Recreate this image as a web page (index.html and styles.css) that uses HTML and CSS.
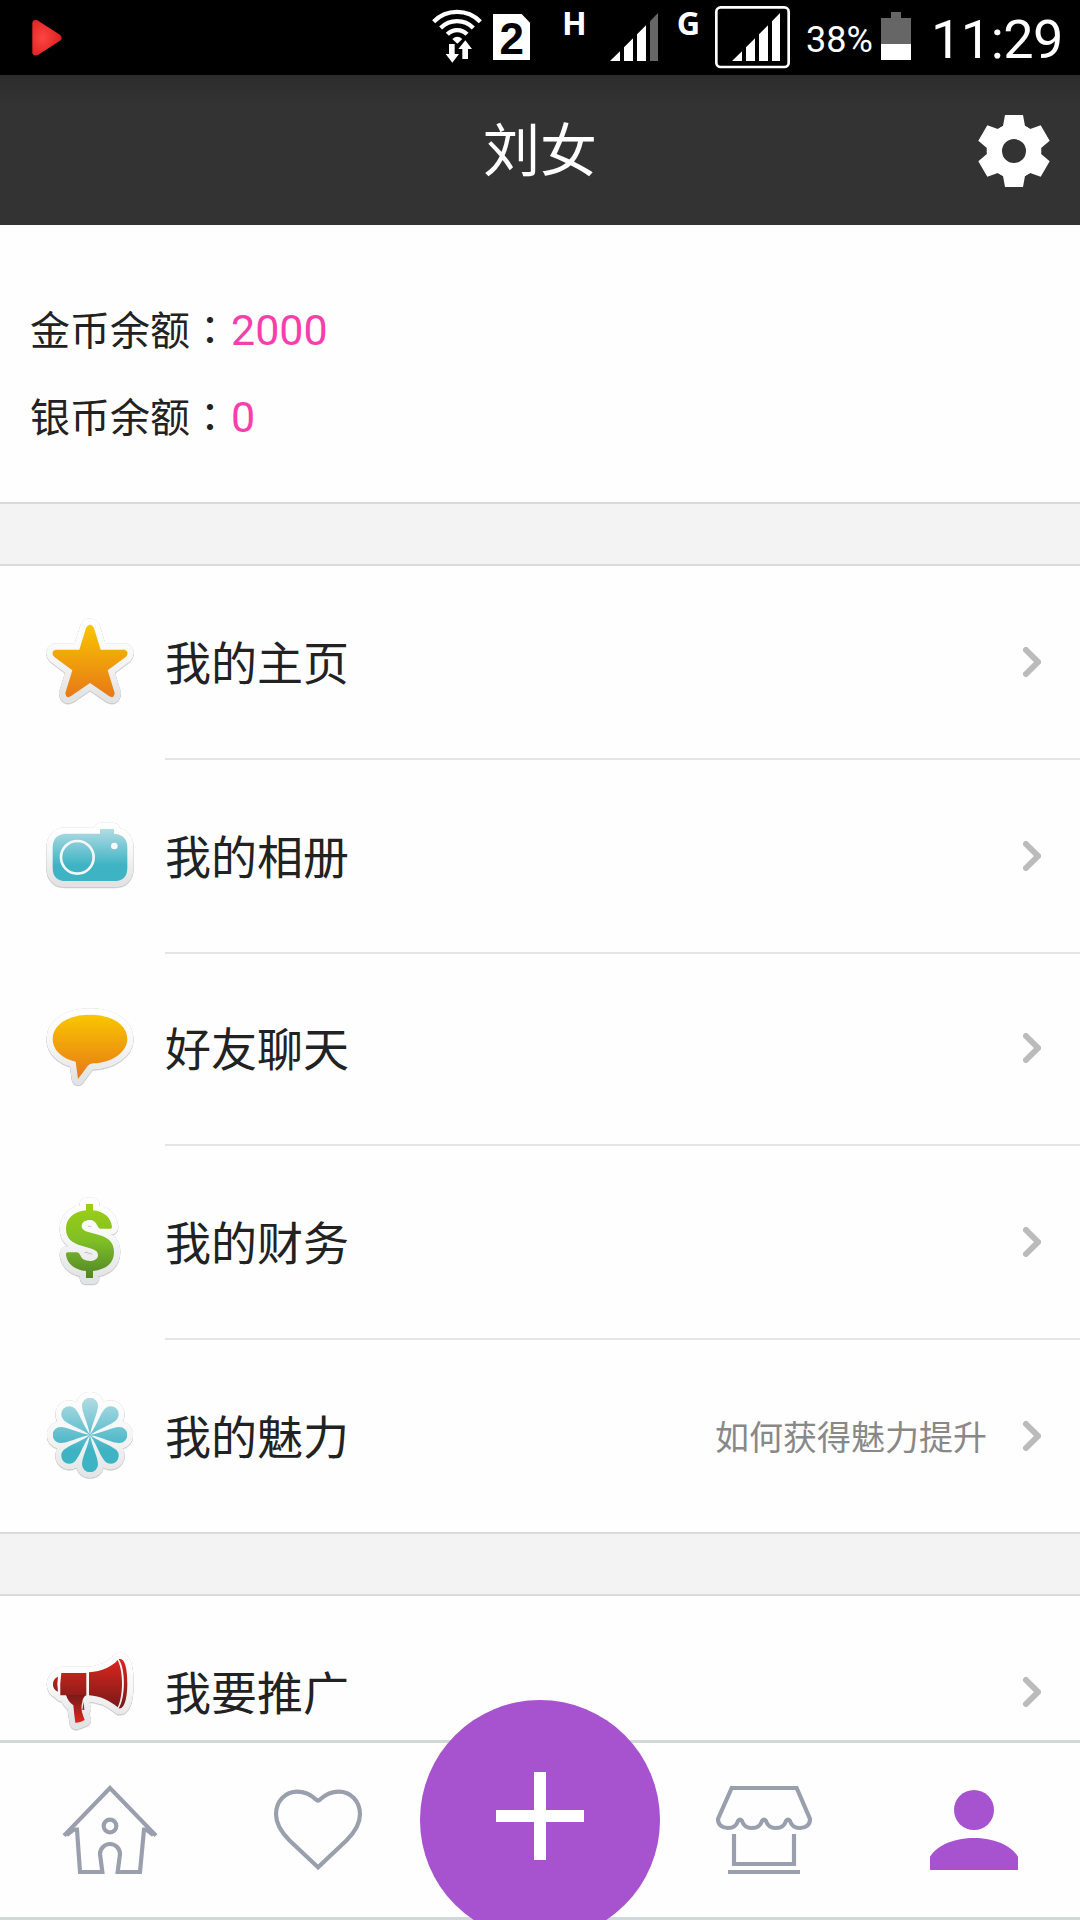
FILE: index.html
```html
<!DOCTYPE html>
<html lang="zh-CN">
<head>
<meta charset="utf-8">
<title>刘女</title>
<link rel="stylesheet" href="styles.css">
</head>
<body>
<svg class="defs" width="0" height="0" aria-hidden="true">
  <defs>
    <linearGradient id="paper" x1="0" y1="0" x2="0" y2="1"><stop offset="0" stop-color="#fff"/><stop offset=".45" stop-color="#f7f7f7"/><stop offset="1" stop-color="#e2e3e4"/></linearGradient>
    <linearGradient id="orange" x1="0" y1="0" x2="0" y2="1"><stop offset="0" stop-color="#f9c600"/><stop offset="1" stop-color="#e77817"/></linearGradient>
    <linearGradient id="teal" x1="0" y1="0" x2="0" y2="1"><stop offset="0" stop-color="#b2dce4"/><stop offset=".7" stop-color="#3eb3c4"/><stop offset="1" stop-color="#3eb3c4"/></linearGradient>
    <linearGradient id="green" gradientUnits="userSpaceOnUse" x1="0" y1="642" x2="0" y2="864"><stop offset="0" stop-color="#9dcf13"/><stop offset=".5" stop-color="#7fbf26"/><stop offset="1" stop-color="#508428"/></linearGradient>
    <linearGradient id="red" gradientUnits="userSpaceOnUse" x1="0" y1="838" x2="0" y2="980"><stop offset="0" stop-color="#dc261f"/><stop offset="1" stop-color="#7a1a18"/></linearGradient>
    <linearGradient id="redHandle" gradientUnits="userSpaceOnUse" x1="0" y1="946" x2="0" y2="1028"><stop offset="0" stop-color="#7a1a18"/><stop offset="1" stop-color="#dc261f"/></linearGradient>
    <radialGradient id="play" cx=".35" cy=".5" r=".6"><stop offset="0" stop-color="#ff4540"/><stop offset="1" stop-color="#dc2324"/></radialGradient>
  </defs>
</svg>

<div class="status">
  <svg class="status-play" viewBox="0 0 300 225"><path fill="url(#play)" d="M97 70Q98 57 112 61L180 104Q190 114 180 122L114 165Q99 170 97 158Z"/></svg>
  <div class="status-right">
    <svg class="status-signals" viewBox="0 0 1128 225">
      <g fill="none" stroke="#fff" stroke-width="13"><path d="M41 65A98 98 0 0 1 181 65"/><path d="M62 84A69 69 0 0 1 160 84"/><path d="M82 103A41 41 0 0 1 141 103"/></g>
      <g fill="#fff">
        <path d="M112 131L97 117Q112 103 127 117Z"/>
        <path stroke="#000" stroke-width="4" paint-order="stroke" d="M87 132H104V162H117L97 188L77 162H87Z"/>
        <path stroke="#000" stroke-width="4" paint-order="stroke" d="M136 121L156 147H144V177H127V147H115Z"/>
        <path d="M219 42H305L330 68V180H219Z"/>
        <path d="M570 183L600 154V183ZM612 183V142L639 115V183ZM651 183V103L678 76V183ZM936 183L966 154V183ZM978 183V142L1005 115V183ZM1017 183V103L1044 76V183ZM1056 183V64L1080 39V183Z"/>
        <path fill="#666" d="M690 183V64L714 39V183Z"/>
        <text class="net" x="426" y="105">H</text><text class="net" x="770" y="106">G</text>
      </g>
      <text class="sim" x="275" y="163" text-anchor="middle">2</text>
      <rect x="889" y="22" width="217" height="179" rx="13" fill="none" stroke="#fff" stroke-width="8"/>
    </svg>
    <span class="percent">38%</span>
    <svg class="battery" viewBox="0 0 90 225"><path fill="#666" d="M0 54H30V36H60V54H90V180H0Z"/><path fill="#fff" d="M0 132H90V180H0Z"/></svg>
    <span class="clock">11:29</span>
  </div>
</div>

<header class="header">
  <h1 class="title">刘女</h1>
  <svg class="gear" viewBox="594 345 216 216">
    <defs><path id="tooth" d="M675 345H729L735 378L753 390H651L669 378Z"/></defs>
    <g fill="#fff"><use href="#tooth"/><use href="#tooth" transform="rotate(60 702 453)"/><use href="#tooth" transform="rotate(120 702 453)"/><use href="#tooth" transform="rotate(180 702 453)"/><use href="#tooth" transform="rotate(240 702 453)"/><use href="#tooth" transform="rotate(300 702 453)"/></g>
    <circle cx="702" cy="453" r="59" fill="none" stroke="#fff" stroke-width="46"/>
  </svg>
</header>

<section class="balance">
  <p>金币余额<span class="colon" lang="zh-TW">：</span><b>2000</b></p>
  <p>银币余额<span class="colon" lang="zh-TW">：</span><b>0</b></p>
</section>

<div class="gap"></div>

<ul class="menu">
  <li class="row">
    <svg class="icon" viewBox="30 36 300 300">
      <defs><path id="star" d="M168 84Q180 64 192 84L212 149H284Q300 156 287 171L233 211L254 279Q252 297 238 289L180 249L122 289Q108 297 106 279L127 211L73 171Q60 156 76 149H148Z"/></defs>
      <use href="#star" class="sticker"/><use href="#star" fill="url(#orange)"/>
    </svg>
    <div class="body"><span>我的主页</span><svg class="chevron" viewBox="0 0 18 30"><path d="M3 3L15 15L3 27"/></svg></div>
  </li>
  <li class="row">
    <svg class="icon" viewBox="30 618 300 300">
      <defs><path id="camera" d="M108 701H210V690Q210 687 213 687H249Q252 687 252 690V701Q292 704 292 743V803Q292 843 252 843H108Q68 843 68 803V743Q68 703 108 701Z"/></defs>
      <use href="#camera" class="sticker"/><use href="#camera" fill="url(#teal)"/>
      <circle cx="142" cy="772" r="49" fill="none" stroke="#f4f6f7" stroke-width="8"/><circle cx="253" cy="738" r="10" fill="#fafafa"/>
    </svg>
    <div class="body"><span>我的相册</span><svg class="chevron" viewBox="0 0 18 30"><path d="M3 3L15 15L3 27"/></svg></div>
  </li>
  <li class="row shorter">
    <svg class="icon" viewBox="30 27 300 300">
      <defs><path id="bubble" d="M180 74C248 74 292 106 292 147C292 186 245 219 190 220Q179 220 173 228L144 267L137 215C96 206 68 180 68 147C68 106 112 74 180 74Z"/></defs>
      <use href="#bubble" class="sticker"/><use href="#bubble" fill="url(#orange)"/>
    </svg>
    <div class="body"><span>好友聊天</span><svg class="chevron" viewBox="0 0 18 30"><path d="M3 3L15 15L3 27"/></svg></div>
  </li>
  <li class="row">
    <svg class="icon" viewBox="30 606 300 300">
      <defs><path id="coin" d="M168 642H189V661C222 664 242 682 246 710Q246 716 241 716H212Q206 716 202 707C198 696 190 690 179 690C166 690 155 697 155 708C155 717 161 722 175 726L207 735C236 743 252 758 252 786C252 819 230 838 189 843V864H168V843C134 840 112 822 108 795Q107 787 113 787H141Q147 787 151 796C155 807 165 813 180 813C195 813 204 806 204 795C204 786 198 780 185 776L155 767C126 759 108 745 108 716C108 686 130 665 168 661Z"/></defs>
      <use href="#coin" class="sticker"/><use href="#coin" fill="url(#green)"/>
      <path d="M174 709Q180 707 184 711M164 788Q172 785 176 790Q182 788 187 794" fill="none" stroke="#a8a8a8" stroke-width="2"/>
    </svg>
    <div class="body"><span>我的财务</span><svg class="chevron" viewBox="0 0 18 30"><path d="M3 3L15 15L3 27"/></svg></div>
  </li>
  <li class="row last">
    <svg class="icon" viewBox="30 18 300 300">
      <defs>
        <path id="petal" d="M180 167C175 130 156 99 156 77A24 24 0 0 1 204 77C204 99 185 130 180 167Z"/>
        <clipPath id="petals"><use href="#petal"/><use href="#petal" transform="rotate(45 180 165)"/><use href="#petal" transform="rotate(90 180 165)"/><use href="#petal" transform="rotate(135 180 165)"/><use href="#petal" transform="rotate(180 180 165)"/><use href="#petal" transform="rotate(225 180 165)"/><use href="#petal" transform="rotate(270 180 165)"/><use href="#petal" transform="rotate(315 180 165)"/></clipPath>
        <clipPath id="scallop"><circle cx="180" cy="77" r="42"/><circle cx="242" cy="103" r="42"/><circle cx="268" cy="165" r="42"/><circle cx="242" cy="227" r="42"/><circle cx="180" cy="253" r="42"/><circle cx="118" cy="227" r="42"/><circle cx="92" cy="165" r="42"/><circle cx="118" cy="103" r="42"/><circle cx="180" cy="165" r="70"/></clipPath>
      </defs>
      <g class="shadow"><rect x="49" y="34" width="262" height="262" fill="url(#paper)" clip-path="url(#scallop)"/></g>
      <rect x="68" y="53" width="224" height="224" fill="url(#teal)" clip-path="url(#petals)"/>
    </svg>
    <div class="body"><span>我的魅力</span><small>如何获得魅力提升</small><svg class="chevron" viewBox="0 0 18 30"><path d="M3 3L15 15L3 27"/></svg></div>
  </li>
</ul>

<div class="gap"></div>

<ul class="menu">
  <li class="row last">
    <svg class="icon" viewBox="30 786 300 300">
      <path class="sticker" d="M84 889L94 879H170C215 876 245 862 266 838Q292 832 292 910Q292 985 269 985C240 960 205 946 165 946L158 965L164 985L158 1000L164 1020L138 1030L130 978Q110 964 108 946H94L84 936C64 930 64 896 84 889Z"/>
      <g fill="url(#red)">
        <path d="M84 890Q80 912 84 935C64 929 64 896 84 890ZM94 879H169V946H91Q89 912 94 879ZM177 877C216 874 246 860 263 840C281 875 280 950 263 982C239 962 211 948 177 946Z"/>
        <path d="M266 838C288 830 292 880 292 910C292 945 286 990 266 985C287 955 287 865 266 838Z"/>
      </g>
      <path fill="url(#redHandle)" d="M108 945H169Q158 952 157 966Q151 985 159 1006L164 1020Q150 1029 136 1028Q132 1000 130 976Q114 965 108 945ZM161 965L163 990H157Z"/>
    </svg>
    <div class="body"><span>我要推广</span><svg class="chevron" viewBox="0 0 18 30"><path d="M3 3L15 15L3 27"/></svg></div>
  </li>
</ul>

<nav class="tabs">
  <a class="tab"><svg viewBox="180 180 300 300"><g class="line"><path d="M192 347L330 204L468 347"/><path d="M200 345L221 329H231L240 456H307L300 402A30 30 0 0 1 360 402L353 456H420L432 329H439L460 345"/><circle cx="330" cy="318" r="19"/></g></svg></a>
  <a class="tab"><svg viewBox="804 180 300 300"><path class="line" d="M954 442L868 361C843 336 828 310 828 283C828 243 856 215 892 215C916 215 932 224 947 238Q954 245 961 238C976 224 992 215 1016 215C1052 215 1080 243 1080 283C1080 310 1065 336 1040 361Z"/></svg></a>
  <a class="tab"><svg class="add" viewBox="0 0 240 240"><circle cx="120" cy="120" r="120" fill="#a752ce"/><path fill="#fff" d="M114 72H126V110H164V122H126V160H114V122H76V110H114Z"/></svg></a>
  <a class="tab"><svg viewBox="72 420 300 300"><g class="line"><path d="M125 444H320L360 537C360 555 347 564 330 564C314 564 304 556 300 543Q294 535 288 543C284 556 274 564 258 564C242 564 232 556 228 543Q222 535 216 543C212 556 202 564 186 564C170 564 160 556 156 543Q150 535 144 543C140 556 130 564 114 564C97 564 84 555 84 537Z"/><path d="M132 582V672H312V582M114 696H330"/></g></svg></a>
  <a class="tab"><svg viewBox="696 420 300 300"><g fill="#a752ce"><circle cx="852" cy="510" r="60"/><path d="M720 690V650C742 614 796 594 852 594S962 614 984 650V690Z"/></g></svg></a>
</nav>
</body>
</html>
```
FILE: styles.css
```css
* { box-sizing: border-box; margin: 0; padding: 0; }

body {
  width: 1080px;
  height: 1920px;
  overflow: hidden;
  background: #fefefe;
  color: #222;
  font-family: Roboto, "Noto Sans CJK SC", sans-serif;
}

svg { display: block; flex: none; }
.defs { position: absolute; }

.status {
  display: flex;
  justify-content: space-between;
  height: 75px;
  background: #000;
  color: #fff;
}
.status-play { width: 100px; height: 75px; }
.status-right { display: flex; width: 660px; }
.status-signals { width: 376px; height: 75px; }
.net { font: 700 97px "Open Sans", sans-serif; }
.sim { font: 700 132px "Liberation Sans", sans-serif; }
.percent { width: 75px; margin-left: 10px; font-size: 36px; line-height: 80px; }
.battery { width: 30px; height: 75px; }
.clock { margin-left: 20px; font-size: 54px; line-height: 80px; letter-spacing: -0.5px; }

.header {
  display: flex;
  align-items: center;
  justify-content: center;
  position: relative;
  height: 150px;
  background: linear-gradient(#2c2c2c, #333 30px);
  color: #fff;
}
.title { padding-top: 4px; font-size: 57px; font-weight: 400; line-height: 80px; }
.gear { position: absolute; right: 30px; top: 40px; width: 72px; height: 72px; }

.balance {
  height: 277px;
  padding: 60px 30px 0;
  font-size: 40px;
}
.balance p { height: 87px; line-height: 87px; white-space: nowrap; }
.balance b { margin-left: 1px; color: #f63fac; font-size: 43px; font-weight: 400; }
.colon { font-family: "Noto Sans CJK TC", sans-serif; }

.gap {
  height: 64px;
  background: #f3f3f3;
  border-top: 2px solid #dadada;
  border-bottom: 2px solid #dadada;
}

.menu { list-style: none; }
.row {
  display: flex;
  gap: 25px;
  height: 194px;
  padding-left: 40px;
  font-size: 46px;
}
.row.shorter, .row.last { height: 192px; }
.icon { width: 100px; height: 100px; margin-top: 46px; overflow: visible; }
.shorter .icon { margin-top: 45px; }
.body {
  display: flex;
  align-items: center;
  flex: 1;
  padding-right: 39px;
  border-bottom: 2px solid #e5e5e5;
}
.shorter .body { padding-bottom: 2px; }
.last .body { border-bottom: 0; }
.body span { flex: 1; padding-bottom: 4px; }
.body small { padding-bottom: 1px; margin-right: 36px; color: #888; font-size: 34px; }
.chevron { width: 18px; height: 30px; fill: none; stroke: #bbb; stroke-width: 6; stroke-linecap: round; }

.sticker {
  fill: url(#paper);
  stroke: url(#paper);
  stroke-width: 38;
  stroke-linejoin: round;
}
.sticker, .shadow { filter: drop-shadow(0 0 1px rgba(0, 0, 0, .2)) drop-shadow(0 2px 1px rgba(0, 0, 0, .25)); }

.tabs {
  position: fixed;
  left: 0;
  bottom: 0;
  display: grid;
  grid-template-columns: 220px 196px 248px 200px 216px;
  width: 1080px;
  height: 180px;
  background: #fefefe;
  border-top: 3px solid #d0d8da;
  border-bottom: 3px solid #d0d8da;
}
.tab { display: flex; justify-content: center; padding-top: 37px; }
.tab svg { width: 100px; height: 100px; }
.tab .add { width: 240px; height: 240px; margin-top: -80px; }
.line { fill: none; stroke: #9a9fae; stroke-width: 12.5; }
```
